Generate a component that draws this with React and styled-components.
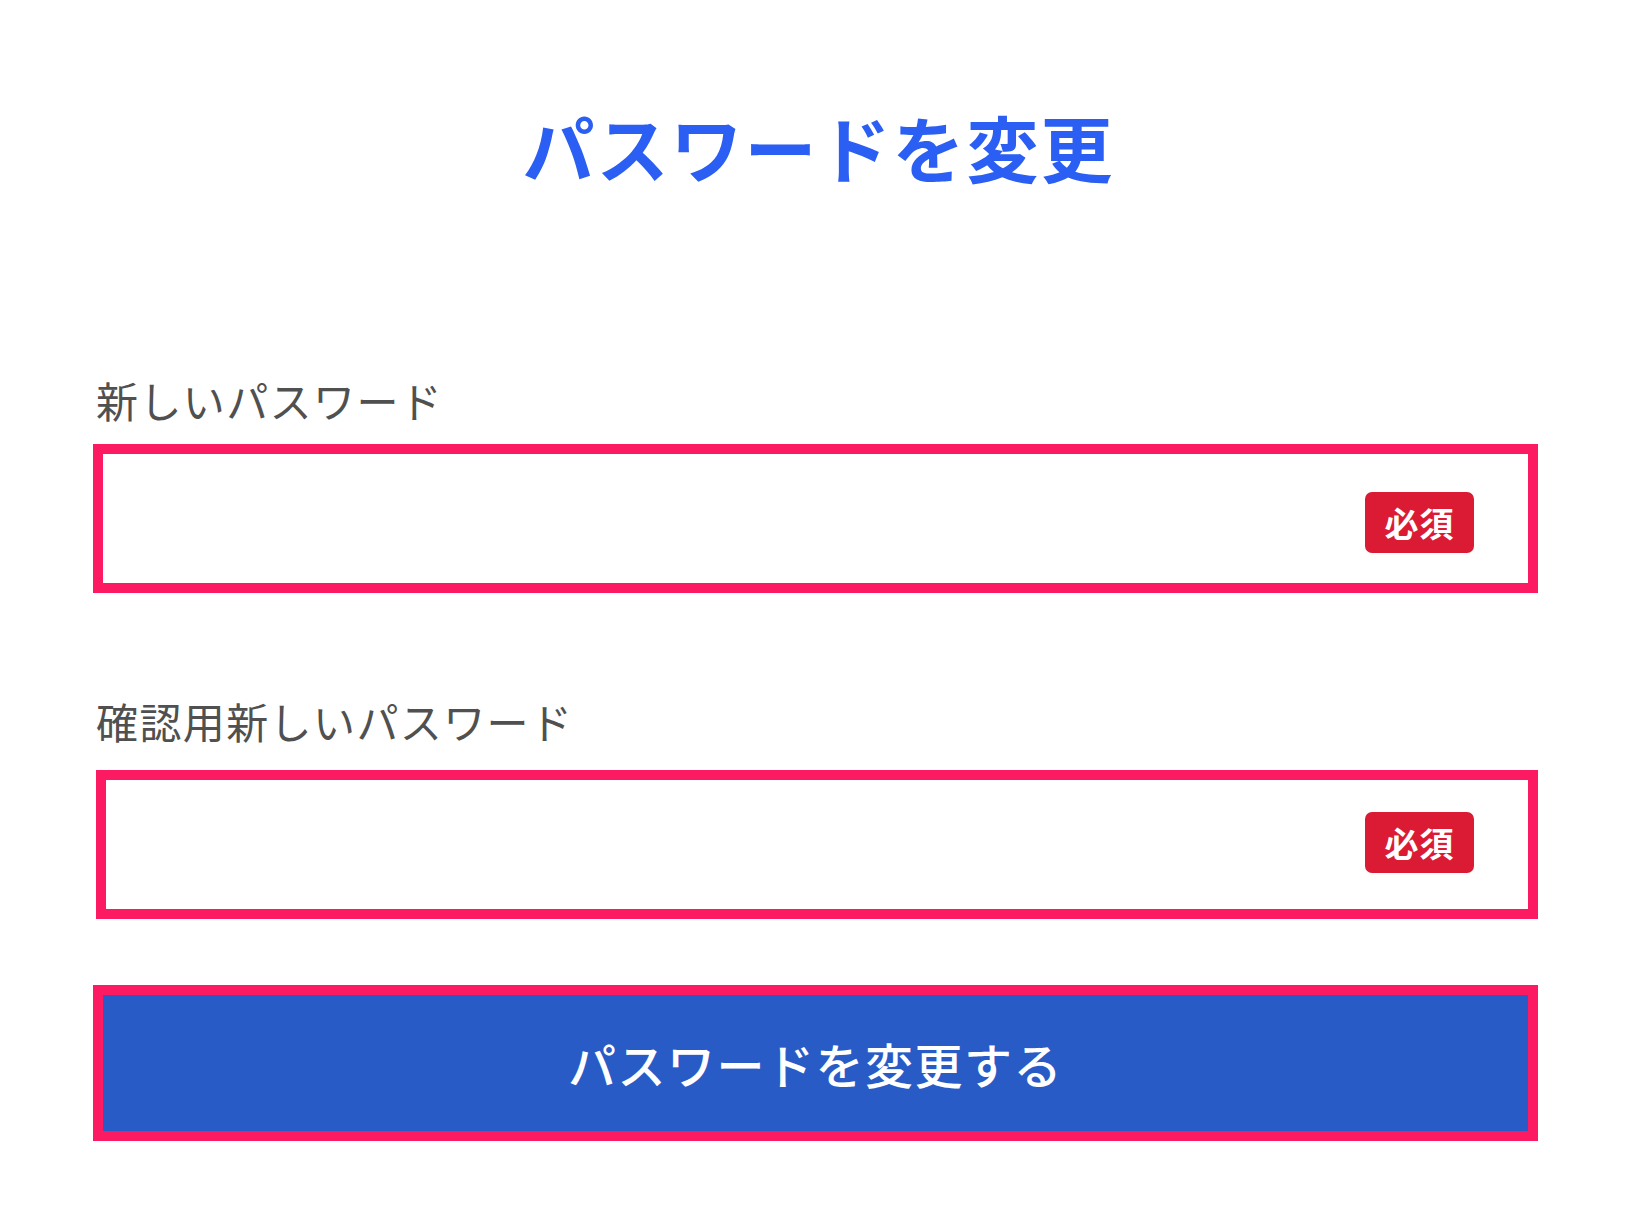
import styled, { createGlobalStyle } from "styled-components";

const GlobalStyle = createGlobalStyle`
    * {
        box-sizing: border-box;
    }

    body {
        margin: 0;
        background-color: #ffffff;
        font-family: "Noto Sans CJK JP", "Noto Sans", sans-serif;
    }
`;

function App() {
    return (
        <>
            <GlobalStyle />
            <Wrapper>
                <Title>パスワードを変更</Title>
                <Form onSubmit={(e) => e.preventDefault()}>
                    <Field $top={186}>
                        <Label htmlFor="new-password" $gap={19}>
                            新しいパスワード
                        </Label>
                        <InputBox>
                            <PasswordInput id="new-password" type="password" />
                            <Badge $offset={4}>必須</Badge>
                        </InputBox>
                    </Field>
                    <Field $top={103}>
                        <Label htmlFor="confirm-password" $gap={24}>
                            確認用新しいパスワード
                        </Label>
                        <InputBox $shift={3}>
                            <PasswordInput id="confirm-password" type="password" />
                            <Badge $offset={-2}>必須</Badge>
                        </InputBox>
                    </Field>
                    <SubmitButton type="submit">パスワードを変更する</SubmitButton>
                </Form>
            </Wrapper>
        </>
    );
}

export default App;

const Wrapper = styled.div`
    display: flex;
    flex-direction: column;
    padding: 103px 98px 80px 93px;
`;

const Title = styled.h1`
    margin: 0;
    padding-left: 6px;
    font-size: 72px;
    line-height: 86px;
    font-weight: 700;
    letter-spacing: 2px;
    color: #2b5ef2;
    text-align: center;
`;

const Form = styled.form`
    display: flex;
    flex-direction: column;
    width: 1445px;
`;

const Field = styled.div`
    display: flex;
    flex-direction: column;
    margin-top: ${(props) => props.$top}px;
`;

const Label = styled.label`
    padding-left: 3px;
    font-size: 42px;
    line-height: 50px;
    font-weight: 400;
    letter-spacing: 1.4px;
    color: #505050;
    margin-bottom: ${(props) => props.$gap}px;
`;

const InputBox = styled.div`
    display: flex;
    align-items: center;
    height: 149px;
    margin-left: ${(props) => props.$shift || 0}px;
    padding-right: 54px;
    border: 10px solid #fc1b63;
    background-color: #ffffff;
`;

const PasswordInput = styled.input`
    flex: 1;
    height: 100%;
    border: none;
    padding: 0 28px;
    font-size: 40px;
    background: transparent;

    &:focus {
        outline: none;
    }
`;

const Badge = styled.span`
    display: flex;
    align-items: center;
    justify-content: center;
    width: 109px;
    height: 61px;
    margin-top: ${(props) => props.$offset * 2 || 0}px;
    border-radius: 7px;
    background-color: #db1a34;
    color: #ffffff;
    font-size: 34px;
    font-weight: 700;
    letter-spacing: 1px;
`;

const SubmitButton = styled.button`
    margin-top: 66px;
    height: 156px;
    border: 10px solid #fc1b63;
    background-color: #285bc6;
    color: #ffffff;
    font-family: "Noto Sans CJK JP", "Noto Sans", sans-serif;
    font-size: 48px;
    font-weight: 500;
    letter-spacing: 1.5px;
    cursor: pointer;
`;
